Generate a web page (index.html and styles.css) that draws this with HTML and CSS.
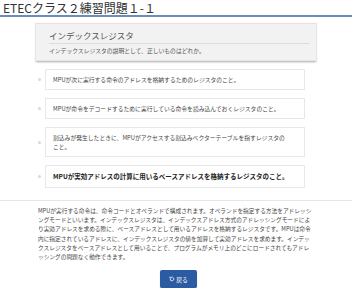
FILE: index.html
```html
<!DOCTYPE html>
<html lang="ja">

<head>
    <meta charset="UTF-8">
    <meta name="viewport" content="width=device-width, initial-scale=1.0">
    <title>ETECクラス２練習問題１-１</title>

    <link rel="stylesheet" href="styles.css">

</head>

<body>
    <div class="page-header">
        <h1 class="page-title">ETECクラス２練習問題１-１</h1>
    </div>

    <div class="question-box">
        <div class="question-title">インデックスレジスタ</div>
        <div class="question-text">インデックスレジスタの説明として、正しいものはどれか。</div>
    </div>

    <ul class="choices">
        <li class="choice">
            <span class="bullet"></span>
            <div class="choice-body">MPUが次に実行する命令のアドレスを格納するためのレジスタのこと。</div>
        </li>
        <li class="choice">
            <span class="bullet"></span>
            <div class="choice-body">MPUが命令をデコードするために実行している命令を読み込んでおくレジスタのこと。</div>
        </li>
        <li class="choice">
            <span class="bullet"></span>
            <div class="choice-body tall">割込みが発生したときに、MPUがアクセスする割込みベクターテーブルを指すレジスタのこと。</div>
        </li>
        <li class="choice">
            <span class="bullet"></span>
            <div class="choice-body correct">MPUが実効アドレスの計算に用いるベースアドレスを格納するレジスタのこと。</div>
        </li>
    </ul>

    <div class="explain">
        <p>MPUが実行する命令は、命令コードとオペランドで構成されます。オペランドを指定する方法をアドレッシングモードといいます。インデックスレジスタは、インデックスアドレス方式のアドレッシングモードにより実効アドレスを求める際に、ベースアドレスとして用いるアドレスを格納するレジスタです。MPUは命令内に指定されているアドレスに、インデックスレジスタの値を加算して実効アドレスを求めます。インデックスレジスタをベースアドレスとして用いることで、プログラムがメモリ上のどこにロードされてもアドレッシングの問題なく動作できます。</p>
    </div>

    <div class="actions">
        <button class="btn-back" type="button">
            <svg width="6" height="6" viewBox="0 0 10 10"><path d="M2 5a3 3 0 1 0 1-2.3M1.5 1v2.5H4" fill="none" stroke="#fff" stroke-width="1.3"/></svg>
            戻る
        </button>
    </div>
</body>

</html>
```

FILE: styles.css
```css
* {
    margin: 0;
    padding: 0;
    box-sizing: border-box;
}

body {
    background-color: #fff;
    font-family: "Noto Sans CJK JP", "Noto Sans", sans-serif;
    color: #444;
    width: 357px;
}

.page-header {
    width: 352px;
    padding: 0 3px;
    border-bottom: 2px solid #6a8cc0;
}

.page-title {
    font-size: 12px;
    font-weight: 400;
    line-height: 14px;
    color: #333;
    padding-top: 1px;
}

.question-box {
    width: 282px;
    margin: 6px 0 0 35px;
    padding: 6px 7px 5px 13px;
    background-color: #f2f2f2;
    border: 1px solid #e6e6e6;
    border-top-color: #f7d9d9;
    box-shadow: 0 2px 2px -1px rgba(0,0,0,0.35);
}

.question-title {
    font-size: 8.5px;
    line-height: 11px;
    color: #555;
    padding-bottom: 2px;
    border-bottom: 1px solid #dcdcdc;
}

.question-text {
    font-size: 5.8px;
    line-height: 9px;
    margin-top: 2px;
    color: #555;
}

.choices {
    list-style: none;
    margin: 8px 0 0 38px;
    width: 267px;
    display: flex;
    flex-direction: column;
    gap: 8px;
}

.choice {
    display: flex;
    align-items: center;
    gap: 4px;
}

.bullet {
    width: 3px;
    height: 3px;
    border-radius: 50%;
    background-color: #d8d8d8;
    flex-shrink: 0;
}

.choice-body {
    flex: 1;
    height: 21px;
    padding: 0 18px 0 7px;
    border: 1px solid #e8e8e8;
    font-size: 5.8px;
    line-height: 19px;
    color: #444;
}

.choice-body.tall {
    height: 30px;
    line-height: 9px;
    padding-top: 5px;
}

.choice-body.correct {
    height: 23px;
    padding-right: 6px;
    font-size: 6.5px;
    font-weight: bold;
    line-height: 21px;
    color: #222;
    white-space: nowrap;
}

.explain {
    width: 352px;
    margin-top: 12px;
    border-top: 1px solid #e6e6e6;
    padding: 5px 38px 0 38px;
}

.explain p {
    font-size: 5.7px;
    line-height: 9.2px;
    color: #444;
}

.actions {
    width: 357px;
    display: flex;
    justify-content: center;
    margin-top: 9px;
}

.btn-back {
    width: 37px;
    height: 18px;
    border: none;
    border-radius: 2px;
    background-color: #2b5ca3;
    color: #fff;
    font-family: "Noto Sans CJK JP", sans-serif;
    font-size: 5.8px;
    display: flex;
    align-items: center;
    justify-content: center;
    gap: 1px;
    box-shadow: 0 1px 1px rgba(0,0,0,0.3);
}
```
